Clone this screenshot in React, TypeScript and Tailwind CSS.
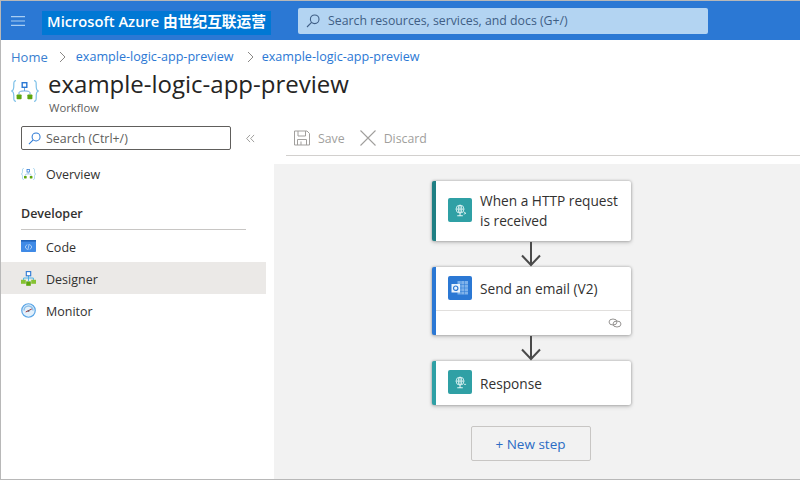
import React from "react";

const font = "font-['Open_Sans','Noto_Sans_CJK_SC',sans-serif]";

function SearchIcon({ className }: { className: string }) {
  return (
    <svg viewBox="0 0 14 14" className={className} fill="none" stroke="currentColor" strokeWidth="1.1">
      <circle cx="8.7" cy="5.3" r="4.3" />
      <path d="M5.6 8.4 L1 13" />
    </svg>
  );
}

function WorkflowIcon({ className }: { className: string }) {
  return (
    <svg viewBox="0 0 28 22" className={className} fill="none">
      <path d="M5 0.7 C2.6 0.7 2.8 2.5 2.8 6 C2.8 9 2.4 10.4 0.7 11 C2.4 11.6 2.8 13 2.8 16 C2.8 19.5 2.6 21.3 5 21.3" stroke="#7cc0e8" strokeWidth="1.2" />
      <path d="M23 0.7 C25.4 0.7 25.2 2.5 25.2 6 C25.2 9 25.6 10.4 27.3 11 C25.6 11.6 25.2 13 25.2 16 C25.2 19.5 25.4 21.3 23 21.3" stroke="#7cc0e8" strokeWidth="1.2" />
      <path d="M8 14.5 V13 C8 11.5 9.5 11 13.5 11 C17.5 11 19 11.5 19 13 V14.5 M13.5 7.5 V11" stroke="#6aa6dc" strokeWidth="1" />
      <rect x="11.2" y="2.7" width="4.6" height="4.6" fill="#fff" stroke="#2b78d4" strokeWidth="1.4" />
      <rect x="5.6" y="14.5" width="5" height="4.8" rx="0.8" fill="#5ea70f" />
      <rect x="16.4" y="14.5" width="5" height="4.8" rx="0.8" fill="#5ea70f" />
    </svg>
  );
}

function CodeIcon() {
  return (
    <svg viewBox="0 0 15 12" className="w-[15px] h-3" fill="none">
      <rect x="0" y="0" width="15" height="12" rx="0.8" fill="#3f8ae6" />
      <rect x="0" y="0" width="15" height="1.6" fill="#2163b8" />
      <path d="M6 4.5 L4.2 7 L6 9.5 M9 4.5 L10.8 7 L9 9.5 M8.2 4 L6.8 10" stroke="#d8e9fc" strokeWidth="0.7" />
    </svg>
  );
}

function DesignerIcon() {
  return (
    <svg viewBox="0 0 15 15" className="w-[15px] h-[15px]" fill="none">
      <path d="M2.6 9 V7 H12.4 V9 M7.5 4.5 V10" stroke="#4fb3e8" strokeWidth="1" />
      <rect x="5.3" y="0.6" width="4.4" height="4.2" fill="#fff" stroke="#2b78d4" strokeWidth="1.1" />
      <rect x="0" y="8.8" width="4.8" height="4" fill="#86c232" />
      <rect x="10.2" y="8.8" width="4.8" height="4" fill="#86c232" />
      <rect x="5.2" y="10.4" width="4.6" height="4.4" fill="#5ea70f" />
    </svg>
  );
}

function MonitorIcon() {
  return (
    <svg viewBox="0 0 16 16" className="w-[15px] h-[15px]" fill="none">
      <circle cx="8" cy="8" r="7.2" fill="#e3f0fb" stroke="#5aa5e6" strokeWidth="1.3" />
      <path d="M3.2 8 A4.8 4.8 0 0 1 12.8 8" stroke="#8cc0ea" strokeWidth="1.6" />
      <path d="M5 9.6 L11.5 6.4" stroke="#a4262c" strokeWidth="1" />
      <circle cx="8" cy="8.4" r="1" fill="#59636e" />
    </svg>
  );
}

function GlobeTile({ color, arrow }: { color: string; arrow?: boolean }) {
  return (
    <div className={`w-6 h-6 rounded-[2px] shrink-0 flex items-center justify-center ${color}`}>
      <svg viewBox="0 0 14 14" className="w-[13px] h-[13px]" fill="none" stroke="#e6f6f6" strokeWidth="0.9">
        <circle cx="6.5" cy="5.5" r="4.3" />
        <ellipse cx="6.5" cy="5.5" rx="1.9" ry="4.3" />
        <path d="M2.2 5.5 H10.8 M6.5 1.2 V9.8" />
        <path d="M6.5 10 V12 M3.5 12.7 H9.5" strokeWidth="1.1" />
        {arrow ? <path d="M10.5 8.5 L12.8 10 L10.5 11" /> : <path d="M10.8 9 H13" />}
      </svg>
    </div>
  );
}

function OutlookTile() {
  return (
    <div className="w-6 h-6 rounded-[2px] shrink-0 flex items-center justify-center bg-[#2b78d4]">
      <svg viewBox="0 0 18 16" className="w-[18px] h-4" fill="none">
        <rect x="6.5" y="1" width="10.5" height="13.5" fill="#7fb2ea" />
        <path d="M6.5 4.5 H17 M6.5 8 H17 M6.5 11.5 H17 M10 1 V14.5 M13.5 1 V14.5" stroke="#2b78d4" strokeWidth="0.5" />
        <rect x="0.5" y="4" width="8.5" height="8.5" fill="#eaf3fc" />
        <circle cx="4.7" cy="8.2" r="2.2" stroke="#2b78d4" strokeWidth="1.2" />
      </svg>
    </div>
  );
}

function Arrow() {
  return (
    <svg viewBox="0 0 20 26" className="w-5 h-[26px] shrink-0" fill="none" stroke="#4a4a4a" strokeWidth="2">
      <path d="M10 1 V24 M1 14.5 L10 24 L19 14.5" />
    </svg>
  );
}

function Crumb() {
  return (
    <svg viewBox="0 0 7 12" className="w-[7px] h-3" fill="none" stroke="#8a8886" strokeWidth="1">
      <path d="M1 1 L6 6 L1 11" />
    </svg>
  );
}

function NavRow({ icon, label, active }: { icon: React.ReactNode; label: string; active?: boolean }) {
  return (
    <div className={`h-8 flex items-center pl-5 ${active ? "bg-[#ebe9e7]" : ""}`}>
      <div className="w-[25px] flex items-center">{icon}</div>
      <span className="text-[12.5px] text-[#323130] pt-1">{label}</span>
    </div>
  );
}

function Card({ bar, children, footer, height }: { bar: string; children: React.ReactNode; footer?: boolean; height: string }) {
  return (
    <div className={`w-[199px] bg-white border-l-4 rounded-[2px] shadow-[0_0_3px_rgba(0,0,0,0.35),0_2px_4px_rgba(0,0,0,0.15)] flex flex-col ${bar} ${height}`}>
      <div className="flex flex-1 items-center gap-2 pl-3 pr-2 pb-[2px] text-[13.7px] leading-5 text-[#323130]">{children}</div>
      {footer ? (
        <div className="h-[25px] border-t border-[#e1dfdd] flex items-center justify-end pr-[9px]">
          <svg viewBox="0 0 14 10" className="w-[14px] h-[10px]" fill="none" stroke="#8a8886" strokeWidth="0.9">
            <ellipse cx="5" cy="4" rx="4" ry="3" />
            <ellipse cx="9" cy="6" rx="4" ry="3" />
          </svg>
        </div>
      ) : null}
    </div>
  );
}

export default function App() {
  return (
    <div className={`w-[800px] h-[480px] overflow-hidden bg-white flex flex-col border-t border-l border-b border-[#b8b8b8] ${font}`}>
      <header className="h-[39px] shrink-0 bg-[#2b78d4] flex items-center">
        <div className="w-[41px] pl-[10px] flex items-center">
          <svg viewBox="0 0 14 10" className="w-[14px] h-[10px]" stroke="#a9cdf2" strokeWidth="1.2">
            <path d="M0 0.6 H14 M0 5 H14 M0 9.4 H14" />
          </svg>
        </div>
        <div className="w-[229px] h-6 mt-1 pb-[2px] bg-[#0078d4] flex items-center justify-center text-white text-[14.7px] font-semibold whitespace-nowrap">
          Microsoft Azure 由世纪互联运营
        </div>
        <div className="ml-[27px] w-[410px] h-[26px] rounded-[2px] bg-[#b3d4f2] flex items-center pl-[8px] text-[12.3px] text-[#3f5e85]">
          <SearchIcon className="w-[14px] h-[14px] mr-2 text-[#3f5e85]" />
          <span className="pt-[2px]">Search resources, services, and docs (G+/)</span>
        </div>
      </header>

      <div className="h-[33px] shrink-0 flex items-center pl-[10px] pt-[1px] text-[#2b78d4] text-[12.6px] whitespace-nowrap">
        <span className="text-[13px] text-[#3a7fd0] pt-[2px]">Home</span>
        <div className="ml-[11px] mr-[10px]"><Crumb /></div>
        <span>example-logic-app-preview</span>
        <div className="ml-[13px] mr-[8px]"><Crumb /></div>
        <span>example-logic-app-preview</span>
      </div>

      <div className="h-[47px] shrink-0 flex pl-[10px]">
        <WorkflowIcon className="w-[28px] h-[22px] mt-[7px] shrink-0" />
        <div className="ml-[9px] -mt-[2px]">
          <div className="text-[24px] leading-[26px] text-[#252423] whitespace-nowrap">example-logic-app-preview</div>
          <div className="text-[11.3px] leading-[15px] mt-[3px] ml-[1px] text-[#605e5c]">Workflow</div>
        </div>
      </div>

      <div className="flex flex-1 min-h-0">
        <aside className="w-[265px] shrink-0 pt-[6px]">
          <div className="flex items-center pl-5">
            <div className="w-[210px] h-6 border border-[#605e5c] rounded-[2px] flex items-center pl-[6px] text-[12.4px] text-[#605e5c]">
              <SearchIcon className="w-[13px] h-[13px] mr-[5px] text-[#2b78d4]" />
              <span className="pt-[2px]">Search (Ctrl+/)</span>
            </div>
            <svg viewBox="0 0 10 10" className="w-[9px] h-[9px] ml-[15px]" fill="none" stroke="#8a8886" strokeWidth="0.9">
              <path d="M4.5 1 L0.7 5 L4.5 9 M9 1 L5.2 5 L9 9" />
            </svg>
          </div>
          <div className="h-8 mt-2 flex items-center pl-5">
            <div className="w-[25px]"><WorkflowIcon className="w-[15px] h-3" /></div>
            <span className="text-[12.5px] text-[#323130] pt-[2px]">Overview</span>
          </div>
          <div className="pl-5 mt-[14px] text-[12.5px] font-semibold text-[#323130] leading-5">Developer</div>
          <div className="ml-5 w-[225px] border-t border-[#c8c6c4] mt-[5px]"></div>
          <NavRow icon={<CodeIcon />} label="Code" />
          <NavRow icon={<DesignerIcon />} label="Designer" active />
          <NavRow icon={<MonitorIcon />} label="Monitor" />
        </aside>

        <main className="flex-1 min-w-0 ml-2 flex flex-col">
          <div className="h-[36px] shrink-0 ml-3 border-b border-[#d2d0ce] flex items-center pl-[8px] text-[12.3px] text-[#a19f9d]">
            <svg viewBox="0 0 16 16" className="w-4 h-4" fill="none" stroke="#a19f9d" strokeWidth="1">
              <path d="M1 1 H13 L15.5 3.5 V15 H0.5 V1 Z M4 1 V6 H11.5 V1 M3.5 15 V9.5 H12.5 V15 M7 11.5 V15" />
            </svg>
            <span className="ml-[8px] pt-[3px]">Save</span>
            <svg viewBox="0 0 16 16" className="w-4 h-4 ml-[15px]" fill="none" stroke="#a19f9d" strokeWidth="1.1">
              <path d="M0.5 0.5 L15.5 15.5 M15.5 0.5 L0.5 15.5" />
            </svg>
            <span className="ml-[8px] pt-[3px]">Discard</span>
          </div>
          <div className="flex-1 mt-2 bg-[#f2f2f2] flex flex-col items-start pt-[17px] pl-[158px]">
            <Card bar="border-[#1f7f83]" height="h-[60px]">
              <GlobeTile color="bg-[#2fa0a5]" arrow />
              <span className="pt-[2px]">When a HTTP request is received</span>
            </Card>
            <div className="w-[199px] flex justify-center pr-[2px]"><Arrow /></div>
            <Card bar="border-[#2b78d4]" height="h-[68px]" footer>
              <OutlookTile />
              <span className="pt-[2px]">Send an email (V2)</span>
            </Card>
            <div className="w-[199px] flex justify-center pr-[2px]"><Arrow /></div>
            <Card bar="border-[#2fa0a5]" height="h-[44px]">
              <GlobeTile color="bg-[#2fa0a5]" />
              <span className="pt-1">Response</span>
            </Card>
            <div className="w-[199px] flex justify-center mt-[21px] -ml-px">
              <div className="w-[120px] h-[35px] border border-[#c8c6c4] rounded-[2px] flex items-center justify-center text-[13.5px] text-[#2b6cc4] pt-[1px]">
                + New step
              </div>
            </div>
          </div>
        </main>
      </div>
    </div>
  );
}
